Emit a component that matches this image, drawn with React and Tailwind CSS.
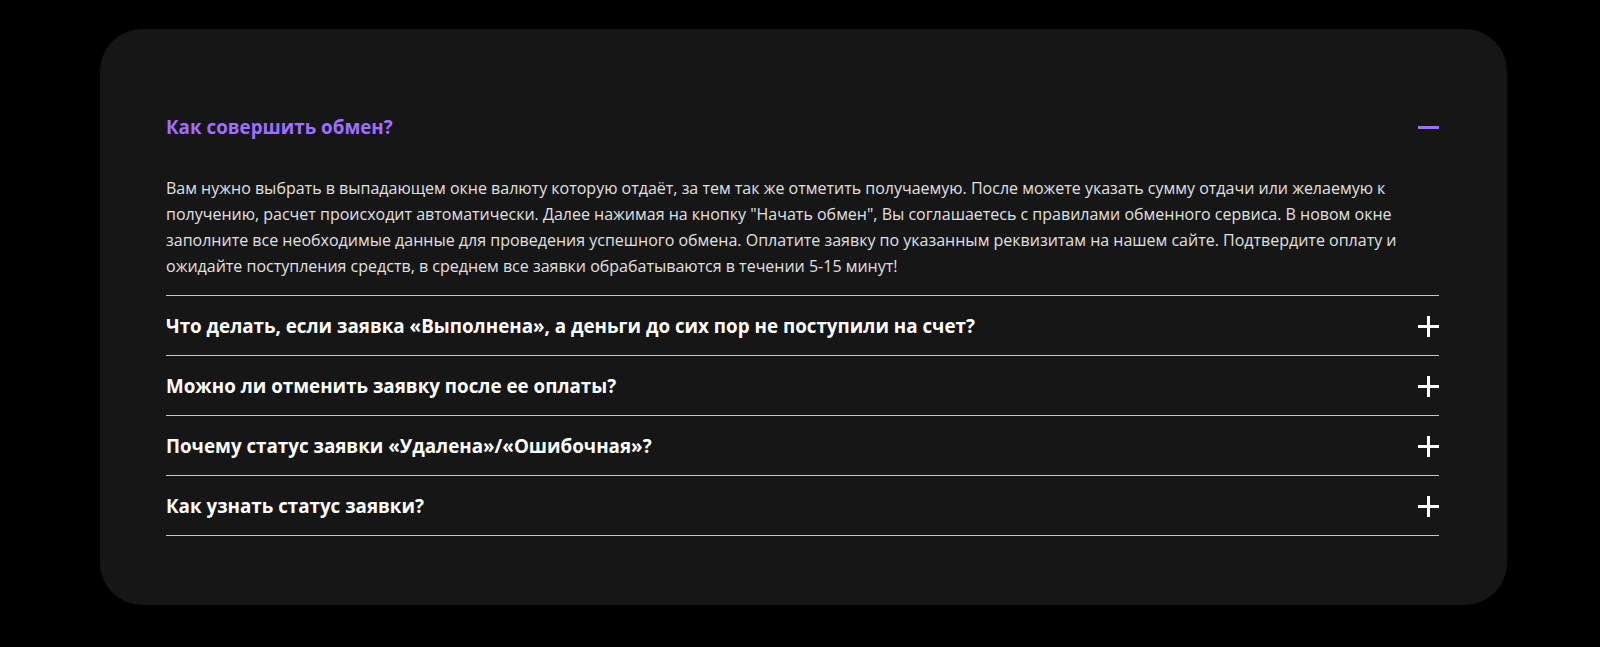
import { useState } from "react";

const faq = [
  {
    q: "Как совершить обмен?",
    a: 'Вам нужно выбрать в выпадающем окне валюту которую отдаёт, за тем так же отметить получаемую. После можете указать сумму отдачи или желаемую к получению, расчет происходит автоматически. Далее нажимая на кнопку "Начать обмен", Вы соглашаетесь с правилами обменного сервиса. В новом окне заполните все необходимые данные для проведения успешного обмена. Оплатите заявку по указанным реквизитам на нашем сайте. Подтвердите оплату и ожидайте поступления средств, в среднем все заявки обрабатываются в течении 5-15 минут!',
  },
  { q: "Что делать, если заявка «Выполнена», а деньги до сих пор не поступили на счет?", a: "" },
  { q: "Можно ли отменить заявку после ее оплаты?", a: "" },
  { q: "Почему статус заявки «Удалена»/«Ошибочная»?", a: "" },
  { q: "Как узнать статус заявки?", a: "" },
];

function ToggleIcon({ open }) {
  return (
    <svg width="21" height="21" viewBox="0 0 21 21" className={open ? "text-[#9f6ffd]" : "text-white"}>
      <path d="M0 10.5h21" stroke="currentColor" strokeWidth="3" />
      {!open && <path d="M10.5 0v21" stroke="currentColor" strokeWidth="3" />}
    </svg>
  );
}

export default function App() {
  const [openIdx, setOpenIdx] = useState(0);

  return (
    <div className="min-h-screen bg-black pt-[29px] font-['Open_Sans','Noto_Sans',sans-serif]">
      <section className="ml-[100px] w-[1407px] rounded-[42px] bg-[#161616] pb-[69px] pl-[66px] pr-[68px] pt-[68px]">
        {faq.map((item, i) => {
          const open = openIdx === i;
          return (
            <div key={item.q} className="border-b border-[#c9c9c9]">
              <button
                onClick={() => setOpenIdx(open ? -1 : i)}
                className="flex h-[59px] w-full items-center justify-between pt-[2px] text-left"
              >
                <span className={`text-[18.8px] font-bold ${open ? "text-[#9f6ffd]" : "text-white"}`}>
                  {item.q}
                </span>
                <ToggleIcon open={open} />
              </button>
              {open && (
                <p className="pb-[16px] pt-[19px] text-[16px] leading-[26px] text-[#e0e0e0]">
                  {item.a}
                </p>
              )}
            </div>
          );
        })}
      </section>
    </div>
  );
}
